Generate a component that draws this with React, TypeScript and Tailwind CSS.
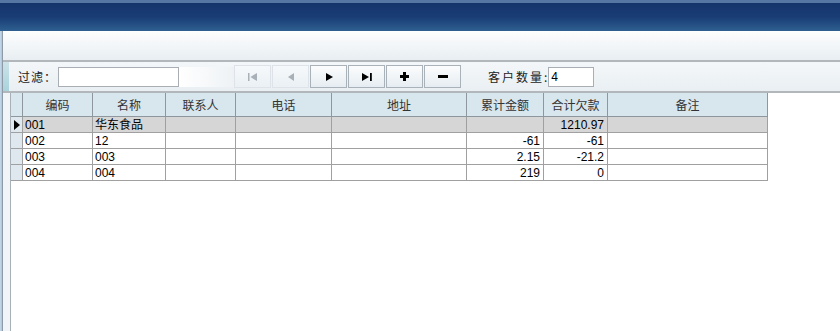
import React from "react";

const cols = [12, 70, 73, 70, 96, 135, 77, 64, 160];
const heads = ["", "编码", "名称", "联系人", "电话", "地址", "累计金额", "合计欠款", "备注"];

const rows = [
  ["001", "华东食品", "", "", "", "", "1210.97", ""],
  ["002", "12", "", "", "", "-61", "-61", ""],
  ["003", "003", "", "", "", "2.15", "-21.2", ""],
  ["004", "004", "", "", "", "219", "0", ""],
];

const font = { fontFamily: '"Noto Sans CJK SC", "Liberation Sans", sans-serif' };

function NavButton({ children, disabled }: { children: React.ReactNode; disabled?: boolean }) {
  return (
    <div
      className={
        disabled
          ? "w-[37px] h-[23px] mr-px flex items-center justify-center border border-[#dde3e8] bg-gradient-to-b from-[#f6f9fb] to-[#eaf0f4] text-[#a8b0b8]"
          : "w-[37px] h-[23px] mr-px flex items-center justify-center border border-[#a9b1b9] bg-gradient-to-b from-[#fbfcfd] to-[#e6edf2] text-black"
      }
    >
      {children}
    </div>
  );
}

export default function App() {
  return (
    <div className="w-[840px] h-[331px] overflow-hidden bg-white flex flex-col text-[12px]" style={font}>
      {/* Title bar */}
      <div className="h-[31px] shrink-0 flex flex-col">
        <div className="h-[3px] bg-[#5677a3]" />
        <div className="flex-1 bg-gradient-to-b from-[#15346c] via-[#1a3d76] to-[#2e6090]" />
      </div>

      <div className="flex flex-1 min-h-0">
        {/* left frame edge */}
        <div className="w-[3px] bg-gradient-to-r from-[#c8dcec] to-[#a9c4dc] border-r border-[#8e9aa6]" />

        <div className="flex-1 flex flex-col min-w-0">
          {/* Empty panel */}
          <div className="h-[29px] shrink-0 bg-gradient-to-b from-[#fdfefe] to-[#e8eef2]" />
          <div className="h-[2px] shrink-0 bg-[#b2b7bb]" />

          {/* Toolbar */}
          <div className="h-[29px] shrink-0 flex items-center bg-gradient-to-b from-[#f4f7f9] to-[#e9eff3]">
            <div className="w-[6px] self-stretch bg-gradient-to-b from-[#cde3e8] to-[#a9d3dc]" />
            <span className="ml-[9px] text-[#222] tracking-[1px]">过滤：</span>
            <div className="ml-[1px] w-[121px] h-[20px] bg-white border border-[#a8aeb4]" />
            <div className="w-[55px] h-[20px] bg-gradient-to-r from-[#ffffff] to-[#eef2f5]" />
            <NavButton disabled>
              <svg width="10" height="8" viewBox="0 0 10 8">
                <rect x="0" y="0" width="1.5" height="8" fill="currentColor" />
                <path d="M9 0 L2.5 4 L9 8 Z" fill="currentColor" />
              </svg>
            </NavButton>
            <NavButton disabled>
              <svg width="8" height="8" viewBox="0 0 8 8">
                <path d="M7 0 L1 4 L7 8 Z" fill="currentColor" />
              </svg>
            </NavButton>
            <NavButton>
              <svg width="8" height="8" viewBox="0 0 8 8">
                <path d="M1 0 L8 4 L1 8 Z" fill="currentColor" />
              </svg>
            </NavButton>
            <NavButton>
              <svg width="10" height="8" viewBox="0 0 10 8">
                <path d="M0 0 L7 4 L0 8 Z" fill="currentColor" />
                <rect x="8" y="0" width="1.8" height="8" fill="currentColor" />
              </svg>
            </NavButton>
            <NavButton>
              <svg width="9" height="9" viewBox="0 0 9 9">
                <rect x="3" y="0" width="3" height="9" fill="currentColor" />
                <rect x="0" y="3" width="9" height="3" fill="currentColor" />
              </svg>
            </NavButton>
            <NavButton>
              <svg width="10" height="3" viewBox="0 0 10 3">
                <rect x="0" y="0" width="10" height="3" fill="currentColor" />
              </svg>
            </NavButton>
            <span className="ml-[26px] text-[#222] tracking-[2px]">客户数量:</span>
            <div className="ml-[-1px] w-[46px] h-[20px] bg-white border border-[#a8aeb4] flex items-center pl-[2px] text-black" style={{ fontFamily: '"Liberation Sans", sans-serif' }}>
              4
            </div>
          </div>
          <div className="h-[2px] shrink-0 bg-[#b2b7bb]" />

          {/* Grid area */}
          <div className="flex-1 flex min-h-0">
            <div className="w-[7px] bg-[#f2f5f8]" />
            <div className="flex-1 bg-white border-l border-[#a8b0b8]">
              <div className="w-fit">
                <div className="flex h-[24px] bg-[#d8e6ee] text-[#333]">
                  {heads.map((h, i) => (
                    <div
                      key={i}
                      style={{ width: cols[i] }}
                      className="shrink-0 flex items-center justify-center border-r border-b border-[#8f979e]"
                    >
                      {h}
                    </div>
                  ))}
                </div>
                {rows.map((r, ri) => (
                  <div key={ri} className={ri === 0 ? "flex h-[16px] bg-[#d6d6d6]" : "flex h-[16px] bg-white"}>
                    <div
                      style={{ width: cols[0] }}
                      className="shrink-0 flex items-center justify-center bg-[#dfe8ee] border-r border-b border-[#a0a0a0]"
                    >
                      {ri === 0 && (
                        <svg width="6" height="10" viewBox="0 0 6 10">
                          <path d="M0 0 L6 5 L0 10 Z" fill="#000" />
                        </svg>
                      )}
                    </div>
                    {r.map((c, ci) => (
                      <div
                        key={ci}
                        style={{ width: cols[ci + 1], fontFamily: '"Liberation Sans", "Noto Sans CJK SC", sans-serif' }}
                        className={
                          (ci === 5 || ci === 6 ? "justify-end pr-[3px] " : "justify-start pl-[2px] ") +
                          "shrink-0 flex items-center leading-none text-black border-r border-b border-[#a0a0a0] overflow-hidden whitespace-nowrap"
                        }
                      >
                        {c}
                      </div>
                    ))}
                  </div>
                ))}
              </div>
            </div>
          </div>
        </div>
      </div>
    </div>
  );
}
